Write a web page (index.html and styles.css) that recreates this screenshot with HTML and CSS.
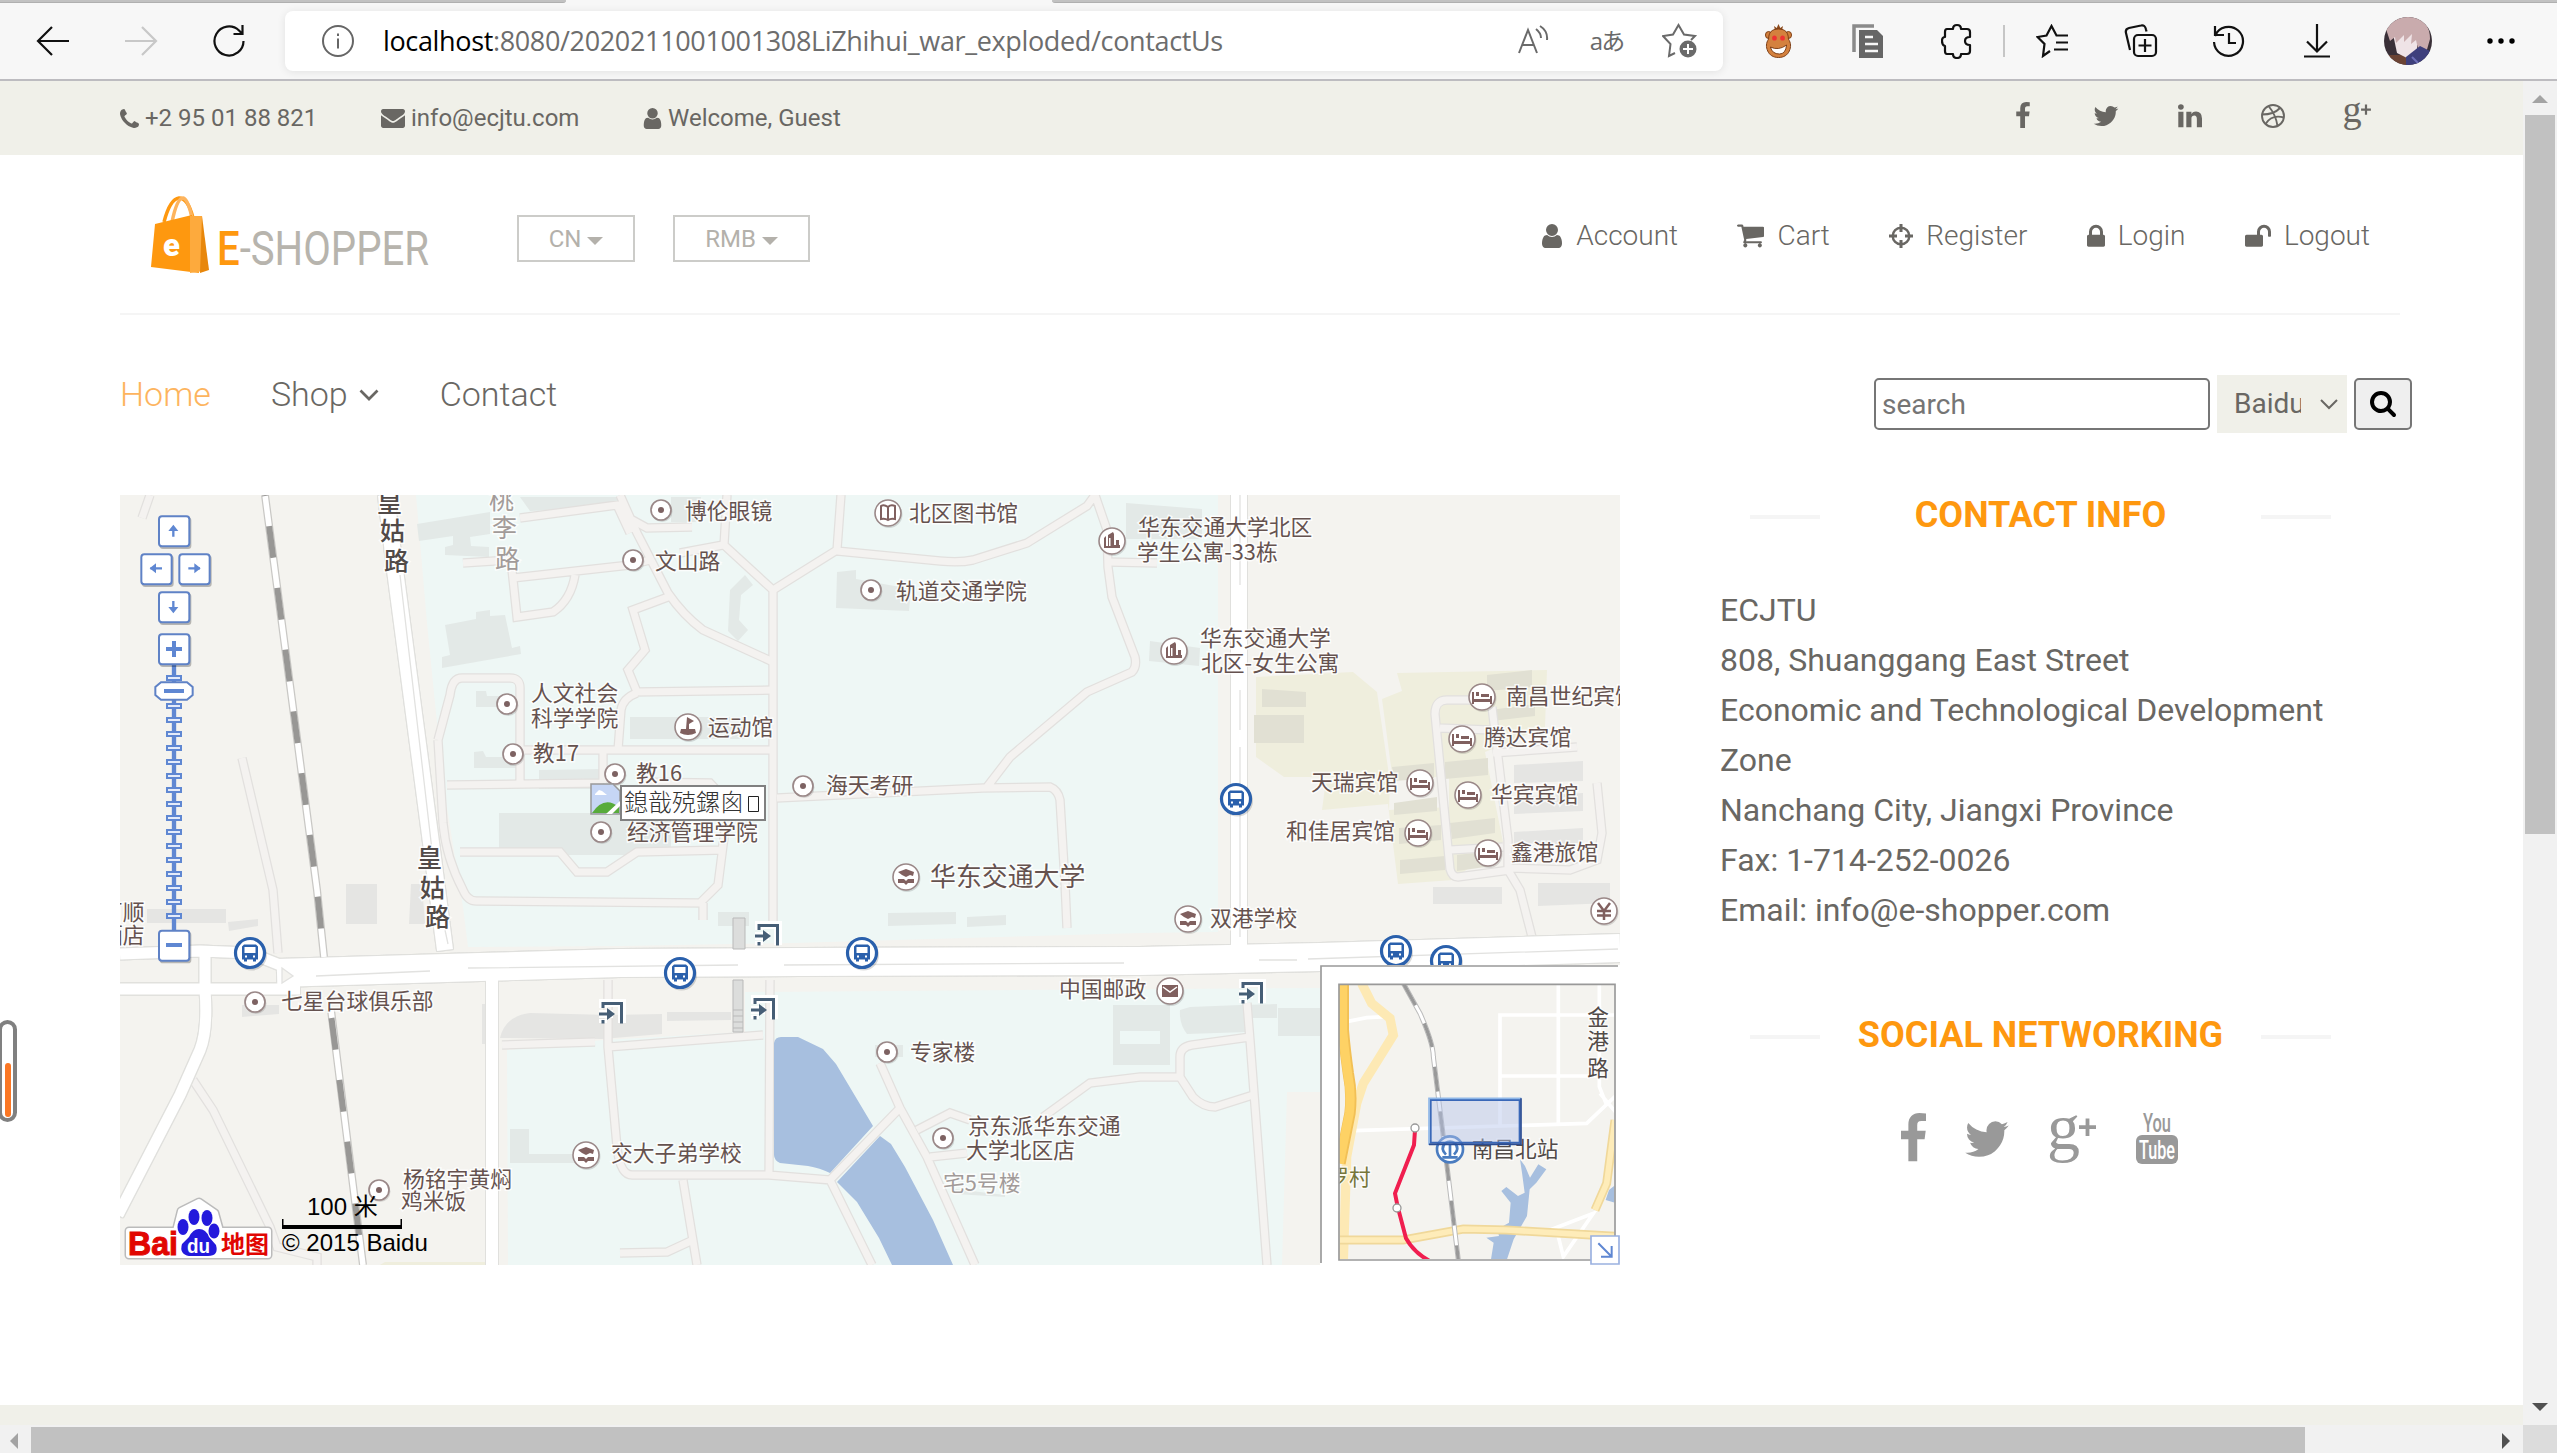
FILE: index.html
```html
<!DOCTYPE html>
<html lang="en">
<head>
<meta charset="utf-8">
<title>Contact | E-Shopper</title>
<link rel="stylesheet" href="styles.css">
</head>
<body>
<svg class="defs" width="0" height="0">
  <symbol id="i-facebook" viewBox="479 0 864 1792"><path d="M1343 12v264h-157q-86 0-116 36t-30 108v189h293l-39 296h-254v759h-306v-759h-255v-296h255v-218q0-186 104-288.500t277-102.500q147 0 228 12z"/></symbol>
  <symbol id="i-twitter" viewBox="64 0 1664 1792"><path d="M1684 408q-67 98-162 167 1 14 1 42 0 130-38 259.500t-115.500 248.500-184.500 210.500-258 146-323 54.500q-271 0-496-145 35 4 78 4 225 0 401-138-105-2-188-64.500t-114-159.500q33 5 61 5 43 0 85-11-112-23-185.500-111.500t-73.500-205.500v-4q68 38 146 41-66-44-105-115t-39-154q0-88 44-163 121 149 294.500 238.500t371.500 99.500q-8-38-8-74 0-134 94.500-228.500t228.500-94.500q140 0 236 102 109-21 205-78-37 115-142 178 93-10 186-50z"/></symbol>
  <symbol id="i-gplus" viewBox="0 0 48 50"><text x="-1" y="35" font-family="Liberation Serif, serif" font-size="66">g</text><path d="M31 11.200h17v3.800h-17zM37.600 4.500h3.800v17.500h-3.800z"/></symbol>
  <symbol id="i-user" viewBox="256 128 1280 1536"><path d="M1536 1399q0 109-62.500 187t-150.500 78h-854q-88 0-150.500-78t-62.500-187q0-85 8.500-160.500t31.500-152 58.500-131 94-89 134.500-34.500q131 128 313 128t313-128q76 0 134.500 34.500t94 89 58.500 131 31.500 152 8.500 160.500zm-256-887q0 159-112.500 271.500t-271.500 112.500-271.500-112.500-112.500-271.500 112.500-271.500 271.500-112.500 271.500 112.500 112.500 271.500z"/></symbol>
  <symbol id="p-dot" viewBox="-14 -14 28 28" overflow="visible"><circle r="10.500" cx="1" cy="1.500" fill="#000" opacity=".13"/><circle r="10" fill="#fff" stroke="#9a8888" stroke-width="1.700"/><circle r="3" fill="#7d6262"/></symbol>
  <symbol id="p-ring" viewBox="-14 -14 28 28" overflow="visible"><circle r="13.500" cx="1" cy="1.500" fill="#000" opacity=".13"/><circle r="13" fill="#fff" stroke="#9a8888" stroke-width="1.600"/></symbol>
  <symbol id="p-bed" viewBox="-14 -14 28 28" overflow="visible"><use href="#p-ring" x="-14" y="-14" width="28" height="28"/><path fill="#80605f" d="M-10-5h2v7h16v-3h2v8h-2v-2h-16v2h-2zM-6-5h3v4h-3zM-1-3h8v3h-8z"/></symbol>
  <symbol id="p-home" viewBox="-14 -14 28 28" overflow="visible"><use href="#p-ring" x="-14" y="-14" width="28" height="28"/><path fill="#80605f" d="M-8-3l2-2v10h2v-11l5-3 1 2v11h2v-5h3v5h1v3h-16z"/><path fill="#fff" d="M-3-3h1.500v8h-1.500z"/></symbol>
  <symbol id="p-school" viewBox="-14 -14 28 28" overflow="visible"><use href="#p-ring" x="-14" y="-14" width="28" height="28"/><path fill="#80605f" d="M-8-5l8-3 8 3-1 4-3-1-4 2-4-2zM-8 2h6l2 2 2-2h6v4h-6l-2 2-2-2h-6z"/></symbol>
  <symbol id="p-bus" viewBox="-16 -16 32 32" overflow="visible"><circle r="15.500" cx="1.500" cy="2" fill="#000" opacity=".15"/><circle r="14.500" fill="#fff" stroke="#2a60ac" stroke-width="3.200"/><path fill="#2a60ac" d="M-6-8.500h12l2 2v13h-2v2h-3v-2h-6v2h-3v-2h-2v-13z"/><path fill="#fff" d="M-5.500-6h11v6h-11zM-5 2.500h2v2h-2zM3 2.500h2v2h-2z"/></symbol>
  <symbol id="p-exit" viewBox="-13 -12 26 24" overflow="visible"><g stroke="#fff" stroke-width="8" fill="none"><path d="M-8-5v-5h19v20M-12 1h14M-8 6v4"/></g><g stroke="#465e76" stroke-width="3" fill="none"><path d="M-8-5v-4.500h18.500v20M-12 1h12M-8 7v3.500"/></g><path fill="#465e76" d="M-4-5l8 6-8 6z"/></symbol>
</svg>

<header class="toolbar">
  <div class="tabs"><i class="tab-left"></i><i class="tab-right"></i></div>
  <div class="tools">
    <span class="tool"><svg class="line" width="36" height="32" viewBox="0 0 36 32"><path d="M34 16H3M17 2L3 16l14 14"/></svg></span>
    <span class="tool dim"><svg class="line" width="36" height="32" viewBox="0 0 36 32"><path d="M2 16h31M19 2l14 14-14 14"/></svg></span>
    <span class="tool"><svg class="line" width="34" height="34" viewBox="0 0 34 34"><path d="M31.500 17A14.500 14.500 0 1 1 27 6.500l3 3M30.500 1v9h-9"/></svg></span>
    <div class="address">
      <svg class="info" width="34" height="34" viewBox="0 0 34 34"><circle cx="17" cy="17" r="15" fill="none" stroke="#666" stroke-width="2"/><path d="M16 14.500h2v10h-2zM16 9.500h2v2.500h-2z" fill="#666"/></svg>
      <span class="url"><b>localhost</b>:8080/2020211001001308LiZhihui_war_exploded/contactUs</span>
      <span class="aux"><svg class="gray" width="34" height="32" viewBox="0 0 34 32"><path d="M2 28L11 5l9 23M5 20h12M19 4q5 4 5 9M23 1q8 5 7 14"/></svg></span>
      <span class="aux lang">aあ</span>
      <span class="aux"><svg class="gray" width="36" height="36" viewBox="0 0 36 36"><path d="M13 30l-6 3 1.500-12L1 13l10-1.500L16.500 2 22 11.500l11 1.500-4 4"/><circle cx="26" cy="26" r="8.500" fill="#6a6a6a" stroke="none"/><path d="M26 21v10M21 26h10" stroke="#fff"/></svg></span>
    </div>
    <span class="tool ext first"><svg width="27" height="34" viewBox="0 0 30 34" preserveAspectRatio="none"><path d="M11 6L10 2l3 2 2-4 2 4 3-2-1 4z" fill="#8c4a1c"/><circle cx="4" cy="11" r="3.500" fill="#d4813e" stroke="#7a3b12"/><circle cx="26" cy="11" r="3.500" fill="#d4813e" stroke="#7a3b12"/><path d="M15 5c8 0 11 4 11 10 3 4 3 8 1 12-2 4-6 6.500-12 6.500S5 31 3 27c-2-4-2-8 1-12C4 9 7 5 15 5z" fill="#d4813e" stroke="#7a3b12"/><circle cx="10.500" cy="14" r="2.600" fill="#e33"/><circle cx="19.500" cy="14" r="2.600" fill="#e33"/><path d="M6 23q9 4 18-2-1 9-8 9-8 0-10-7z" fill="#fff" stroke="#7a3b12"/></svg></span>
    <span class="tool ext"><svg width="32" height="34" viewBox="0 0 32 34"><path d="M2 28V2h20" fill="none" stroke="#8a8a8a" stroke-width="3.500"/><path d="M7 6h18l6 6v22H7z" fill="#666"/><path d="M13 13h8M13 20h13M13 27h13" stroke="#f7f7f7" stroke-width="2.500"/></svg></span>
    <span class="tool ext"><svg class="line" width="32" height="36" viewBox="0 0 32 36"><path d="M5 6h6q0-4 4-4t4 4h6q3 0 3 3v5q-5 0-5 4t5 4v6q0 3-3 3h-6q0 4-4 4t-4-4H5q-2 0-2-3v-5q-3-1-3-5t3-4V9q0-3 2-3z" transform="translate(1 0)" stroke-linejoin="round"/></svg></span>
    <i class="sep"></i>
    <span class="tool"><svg class="line" width="34" height="34" viewBox="0 0 34 34"><path d="M14 27l-7 5 1.500-12L1.500 13l9-1.500L15.500 2l5 9.500H32M20 18.500h12M18 25.500h14"/></svg></span>
    <span class="tool"><svg class="line" width="34" height="34" viewBox="0 0 34 34"><rect x="10" y="11" width="22" height="21" rx="4"/><path d="M21 15v13M14.500 21.500h13M6 26L2 9q-1-4 3-5l12-2.500q4-1 5 4l.5 2"/></svg></span>
    <span class="tool"><svg class="line" width="34" height="34" viewBox="0 0 34 34"><path d="M3 12A14.500 14.500 0 1 1 2 18M3 2v9h9M17 9v10h7"/></svg></span>
    <span class="tool"><svg class="line" width="28" height="34" viewBox="0 0 28 34"><path d="M14 0v27M4 17.500l10 10 10-10M1 32.500h26"/></svg></span>
    <span class="tool avatar"><svg width="48" height="48" viewBox="0 0 48 48"><defs><clipPath id="av"><circle cx="24" cy="24" r="24"/></clipPath></defs><g clip-path="url(#av)"><path fill="#3a3038" d="M0 0h48v48H0z"/><path fill="#6b4334" d="M0 38h24v10H0z"/><path fill="#efe3e6" d="M9 17l24-3v18l-8 10-12-6z"/><path fill="#c9abad" d="M2 12Q12-2 28 0q18 3 18 22l-4 14-8-4-2-9-5 4 1-10-8 8 0-7-8 8-1-6-5 4z"/><path fill="#3e3f7c" d="M22 40l14-11 12 6v13H22z"/><path stroke="#6e6fb8" stroke-width="2" d="M28 40l8 8"/></g></svg></span>
    <span class="tool dots"><svg width="28" height="8" viewBox="0 0 28 8"><circle cx="3" cy="4" r="2.700"/><circle cx="14" cy="4" r="2.700"/><circle cx="25" cy="4" r="2.700"/></svg></span>
  </div>
</header>

<div class="browser">
  <main class="page">
    <div class="topbar">
      <ul class="contacts">
        <li class="c1"><svg width="19" height="19" viewBox="192 256 1408 1408"><path d="M1600 1368q0 27-10 70.500t-21 68.500q-21 50-122 106-94 51-186 51-27 0-53-3.500t-57.500-12.500-47-14.500-55.500-20.500-49-18q-98-35-175-83-127-79-264-216t-216-264q-48-77-83-175-3-9-18-49t-20.500-55.500-14.500-47-12.500-57.500-3.500-53q0-92 51-186 56-101 106-122 25-11 68.500-21t70.500-10q14 0 21 3 18 6 53 76 11 19 30 54t35 63.500 31 53.500q3 4 17.500 25t21.500 35.500 7 28.500q0 20-28.500 50t-62 55-62 53-28.500 46q0 9 5 22.500t8.500 20.500 14 24 11.500 19q76 137 174 235t235 174q2 1 19 11.500t24 14 20.500 8.500 22.500 5q18 0 46-28.500t53-62 55-62 50-28.500q14 0 28.500 7t35.500 21.500 25 17.500q25 15 53.500 31t63.500 35 54 30q70 35 76 53 3 7 3 21z"/></svg><span>+2 95 01 88 821</span></li>
        <li class="c2"><svg width="24" height="19" viewBox="0 256 1792 1408"><path d="M1792 710v794q0 66-47 113t-113 47h-1472q-66 0-113-47t-47-113v-794q44 49 101 87 362 246 497 345 57 42 92.500 65.500t94.500 48 110 24.500h2q51 0 110-24.500t94.500-48 92.500-65.500q170-123 498-345 57-39 100-87zm0-294q0 79-49 151t-122 123q-376 261-468 325-10 7-42.500 31t-54 38.500-52 32.500-57.500 27-50 9h-2q-23 0-50-9t-57.500-27-52-32.500-54-38.500-42.500-31q-91-64-262-182.500t-205-142.500q-62-42-117-115.500t-55-136.500q0-78 41.500-130t118.500-52h1472q65 0 112.500 47t47.500 113z"/></svg><span>info@ecjtu.com</span></li>
        <li class="c3"><svg width="19" height="21"><use href="#i-user"/></svg><span>Welcome, Guest</span></li>
      </ul>
      <ul class="socials">
        <li><svg width="14" height="28"><use href="#i-facebook"/></svg></li>
        <li><svg width="26" height="28"><use href="#i-twitter"/></svg></li>
        <li><svg width="28" height="28" viewBox="0 0 1792 1792"><path d="M477 625v991h-330v-991h330zm21-306q1 73-50.500 122t-135.500 49h-2q-82 0-132-49t-50-122q0-74 51.500-122.500t134.500-48.500 133 48.500 51 122.500zm1166 729v568h-329v-530q0-105-40.500-164.500t-126.500-59.500q-63 0-105.500 34.500t-63.500 85.500q-11 30-11 81v553h-329q2-399 2-647t-1-296l-1-48h329v144h-2q20-32 41-56t56.500-52 87-43.500 114.500-15.500q171 0 275 113.500t104 332.500z"/></svg></li>
        <li><svg class="ball" width="26" height="26" viewBox="0 0 26 26"><circle cx="13" cy="13" r="11"/><path d="M2 11.500q12 0 18-6.500M8.500 3Q16 12 17.500 23M5.500 21q6-10 18.500-6.500"/></svg></li>
        <li><svg width="28" height="29"><use href="#i-gplus"/></svg></li>
      </ul>
    </div>

    <div class="middle">
      <svg class="logo" width="290" height="90" viewBox="140 190 290 90"><g fill="none" stroke="#fe980f" stroke-width="3.500"><path d="M164 222q6-23 15-24 9 0 14 20"/><path d="M172 222q5-24 11-24 5 1 9 20" stroke="#fdb45e"/></g><path fill="#fe980f" d="M155 224l37-9 7 58-48-6z"/><path fill="#fdaa3d" d="M190 216l12 0 2 55-14 2z"/><path fill="#e8870b" d="M202 216l7 54-9 3z"/><text x="163" y="256" font-family="Roboto, sans-serif" font-weight="900" font-size="31" fill="#fff">e</text><text y="265" font-family="Roboto, sans-serif" font-size="48" textLength="212" lengthAdjust="spacingAndGlyphs" x="217" fill="#b7b4ad"><tspan fill="#fe980f" font-weight="500">E</tspan><tspan font-weight="400">-SHOPPER</tspan></text></svg>
      <button class="pick cn">CN<i class="caret"></i></button>
      <button class="pick rmb">RMB<i class="caret"></i></button>
      <ul class="account">
        <li><svg width="22" height="24"><use href="#i-user"/></svg>Account</li>
        <li><svg width="27" height="24" viewBox="64 256 1664 1408"><path d="M704 1536q0 52-38 90t-90 38-90-38-38-90 38-90 90-38 90 38 38 90zm896 0q0 52-38 90t-90 38-90-38-38-90 38-90 90-38 90 38 38 90zm128-1088v512q0 24-16.500 42.500t-40.500 21.500l-1044 122q13 60 13 70 0 16-24 64h920q26 0 45 19t19 45-19 45-45 19h-1024q-26 0-45-19t-19-45q0-11 8-31.500t16-36 21.500-40 15.500-29.500l-177-823h-204q-26 0-45-19t-19-45 19-45 45-19h256q16 0 28.500 6.500t19.500 15.500 13 24.500 8 26 5.500 29.500 4.500 26h1201q26 0 45 19t19 45z"/></svg>Cart</li>
        <li><svg width="24" height="24" viewBox="0 0 24 24"><circle cx="12" cy="12" r="8.300" fill="none" stroke="#696763" stroke-width="2.400"/><circle cx="12" cy="12" r="3" fill="#fff"/><path d="M10.500 0h3v8h-3zM10.500 16h3v8h-3zM0 10.500h8v3H0zM16 10.500h8v3h-8z"/></svg>Register</li>
        <li><svg width="18" height="24" viewBox="320 80 1152 1536"><path d="M640 768h512v-192q0-106-75-181t-181-75-181 75-75 181v192zm832 96v576q0 40-28 68t-68 28h-960q-40 0-68-28t-28-68v-576q0-40 28-68t68-28h32v-192q0-184 132-316t316-132 316 132 132 316v192h32q40 0 68 28t28 68z"/></svg>Login</li>
        <li><svg width="26" height="24" viewBox="64 80 1664 1536"><path d="M1728 576v256q0 26-19 45t-45 19h-64q-26 0-45-19t-19-45v-256q0-106-75-181t-181-75-181 75-75 181v192h96q40 0 68 28t28 68v576q0 40-28 68t-68 28h-960q-40 0-68-28t-28-68v-576q0-40 28-68t68-28h672v-192q0-185 131.500-316.500t316.500-131.500 316.500 131.500 131.500 316.500z"/></svg>Logout</li>
      </ul>
    </div>

    <div class="menu">
      <nav>
        <a class="active">Home</a>
        <a>Shop<svg width="20" height="12" viewBox="0 0 20 12"><path d="M1.500 1.500L10 10l8.500-8.500" fill="none" stroke="#696763" stroke-width="2.700"/></svg></a>
        <a>Contact</a>
      </nav>
      <form class="search">
        <span class="field">search</span>
        <span class="engine"><span>Baidu</span><svg width="18" height="11" viewBox="0 0 18 11"><path d="M1 1l8 8 8-8" fill="none" stroke="#696763" stroke-width="2"/></svg></span>
        <span class="go"><svg width="26" height="28" viewBox="64 128 1664 1664"><path d="M1216 832q0-185-131.500-316.500t-316.500-131.500-316.500 131.500-131.500 316.500 131.500 316.500 316.500 131.500 316.500-131.500 131.500-316.500zm512 832q0 52-38 90t-90 38q-54 0-90-38l-343-342q-179 124-399 124-143 0-273.500-55.500t-225-150-150-225-55.500-273.500 55.500-273.500 150-225 225-150 273.500-55.500 273.500 55.500 225 150 150 225 55.500 273.500q0 220-124 399l343 343q37 37 37 90z"/></svg></span>
      </form>
    </div>

    <div class="content">
      <svg class="map" width="1500" height="770" viewBox="120 495 1500 770">
        <defs>
          <!-- campus lanes, stroked twice: outline then surface -->
          <g id="lanes">
            <path d="M773 590V925M727 495l-3 50 49 45M841 495l-4 55-64 40M837 551l103 10q20 2 33-1l54-17 60-37 8-11 12 35 1 37 4 30 23 60q2 10-3 15l-45 20-77 65-23 30M777 798l206-10 67-1q8 3 10 13l5 83 2 45"/>
            <path d="M620 495l17 38 31 60q15 22 35 37l70 32M627 517l20 11 45-1M680 553l43-8M668 597l-35 13 12 40-17 20 9 22 136-2M520 750h253M520 518l97-13 13 28M512 570l5 47 36-5q18-12 22-37M463 563l47-3M513 578l117-13 20-5"/>
            <path d="M438 740l12-45q2-17 12-17h48q10 0 10 10v95M447 785l156-2M603 750v33M618 750l3-40q2-12 16-17M438 740l5 83q3 35 20 67 5 12 15 11l222 2 18-18 7-55M460 852h100l17 20h30l30-20 85-2 4-25M640 782l70 1 19 20-3 27M703 903v17"/>
            <path d="M502 1045l93-3M608 980v67l9 100q3 28 15 28h137l61 5 70-72M608 1047l155-12M770 980l-1 195M830 1180l42 85M880 1063l20 45 27 49 48 108M917 1130l33-17 20 7M930 1157l37-4M1043 1117l47-34 50-6h40l13 20q10 10 22 10l38-12M1180 1077v-20q0-10 12-12l58-8M1247 1003l3 37 17 225M683 1180l14 85M620 1253l47-1 26-12"/>
            <path d="M193 1080l20 30 57 117 7 20 40 10v8M142 518l8-23M242 758l31 132 5 63M1480 700h-33q-12 0-12 14l15 155q2 8 8 8l52-7M1492 707l16 133v30l12 20 12 47M1440 728l50 2M1493 753l84-6M1597 783l5 50-5 27-27 10-60-2M1450 850l53-3M1108 562l49 1"/>
          </g>
          <g id="streets">
            <path d="M120 954l80-3 50 2 30 12M120 989h180M205 955v35q3 40-5 60l-20 45-62 120" stroke-width="11"/>
            <path d="M492 970V1265" stroke-width="12"/>
            <path d="M386 495l9 75 37 280 13 100M1239 495V950" stroke-width="16"/>
            <path d="M277 973l203-6 140-4 180-1 340-1 180-4 300-9" stroke-width="28"/>
          </g>
          <clipPath id="ov"><path d="M658 313h825v824H658z"/></clipPath>
        </defs>
        <path fill="#f4f3ef" d="M120 495h1500v770H120z"/>
        <path fill="#eef7f5" d="M416 495l11 128 16 160 20 124 5 40 152-1 173-3 347-10 78-1V495zM507 1050l96-10 142-8v-40l575-4v104h-33l-5 173H508z"/>
        <g fill="#efeedd"><path d="M1256 677l97-5 24 20 13 90-1 28 60-3v-30l-60 0h-105l-28-20zM1397 673l150-3-2 57-60 25 18 90-50 38-55 4-10-80-66 6 4-30 66-6-10-75 20-8z"/><path d="M380 1265l5-3h110v3z"/></g>
        <g fill="#e3e9e7"><path d="M417 524l73-12v22l-20 3 1 9 18 1v10l-44-2v-8l8-2v-9l-34 5zM445 625l31-6v-7l14-2v6l15-1 7 33 8-2 1 8-79 14v-11l8-2zM476 691h10l1 5h22v11h-33zM474 752l9-1 3 6h35v11h-47zM539 770l65-1v20h-65zM499 813h172v42H499zM730 590l15-15 8 10-12 10-2 25 9 10-10 11-10-10zM837 572l19-2v9l55 10-2 22-73-3zM630 717h115v22H630zM520 497h100v10l-90 4zM671 497h30v25h-30zM1126 503l76 6v30h-76zM1150 641l50 7-1 18-50-5zM888 913l68-1v12l-68 2zM967 917l39-2v10l-39 2zM510 1129h19v25h50l-1 9h-68zM718 912h31v14h-31zM1113 1005h57v60h-57zM1180 1010l10-3 50-2 37-1v14h-30v14l-60 2q-8-10-7-24zM1278 1008h42v28h-42zM955 1189l50 6v2l-50-3zM875 1045h28v12h-28z"/><path fill="#eef7f5" d="M1120 1031h40v13h-40z"/></g>
        <g fill="#e5e5e3"><path d="M346 884h31v40h-31zM411 884h11l3 40h-16zM147 909h79v14h-79zM228 922l30-3v7l-29 5zM242 1005h37v9l-37 3zM482 1004h7v40h-7zM500 1038q5-22 30-25l80 2 52-1v20l-60 5zM667 1012h64v8l-64 1zM1433 887h69v17h-69zM1538 883h72v20l-72 3zM1514 765l69-4v20l-69 2zM1514 797l69-4v18l-69 3zM1514 832l69-4v15l-69 2z"/></g>
        <g fill="#e1e0d3"><path d="M1262 689l44 3v15h-44zM1254 715h50v28h-50zM1487 675l45-5v17l-45 4zM1490 710l45-6v12l-43 5zM1392 767l42-4v15l-40 3zM1445 762l43-4v17l-43 4zM1394 803l43-6v14l-43 4zM1399 828l42-3v15l-42 4zM1450 823l45-5v15l-43 6zM1400 860l45-4v14l-45 4zM1457 855l35-4v15l-35 5z"/></g>
        <use href="#lanes" class="lane-edge"/><use href="#lanes" class="lane"/>
        <path fill="#a7bfdf" d="M774 1043q1-6 7-6h17l25 12 13 15 37 62-43 47q-10-5-22-7l-28-3q-6-3-6-8zM880 1136l11 8 14 23 28 53 20 45h-61l-13-27-22-36-20-20z"/>
        <use href="#streets" class="street-edge"/><use href="#streets" class="street"/>
        <g fill="none" stroke="#e2e2e0" stroke-width="1.300"><path d="M400 575l32 275M445 930l3 14M1240 495v90M1240 690v40M1240 747V937M316 976l114-5M468 968l270-3M784 965l340-2M1259 960h38M1308 959l310-10"/><path d="M282 968l11 8-11 7z" fill="#f4f3ef"/></g>
        <g fill="#dcdddc" stroke="#b9b9b9"><path d="M733 918h12v31h-12zM733 980h10v52h-10z"/><path d="M733 1010h10M733 1016h10M733 1022h10M733 1028h10"/></g>
        <g fill="none"><path d="M265 495l52 395 7 67M331 1010l32 255" stroke="#c9c8c5" stroke-width="8"/><path d="M265 495l52 395 7 67M331 1010l32 255" stroke="#fff" stroke-width="5.500"/><path d="M265 495l52 395 7 67" stroke="#989795" stroke-width="6" stroke-dasharray="32 30.300" stroke-dashoffset="31"/><path d="M331.500 1018l31.500 247" stroke="#989795" stroke-width="6" stroke-dasharray="32 30.300"/></g>

        <g class="pois">
          <use href="#p-dot" x="647" y="496" width="28" height="28"/><use href="#p-dot" x="619" y="546" width="28" height="28"/><use href="#p-dot" x="857" y="576" width="28" height="28"/>
          <use href="#p-dot" x="493" y="690" width="28" height="28"/><use href="#p-dot" x="499" y="740" width="28" height="28"/><use href="#p-dot" x="601" y="760" width="28" height="28"/><use href="#p-dot" x="587" y="818" width="28" height="28"/>
          <use href="#p-dot" x="789" y="772" width="28" height="28"/><use href="#p-dot" x="241" y="988" width="28" height="28"/><use href="#p-dot" x="873" y="1038" width="28" height="28"/><use href="#p-dot" x="929" y="1124" width="28" height="28"/><use href="#p-dot" x="365" y="1176" width="28" height="28"/>
          <use href="#p-ring" x="874" y="499" width="28" height="28"/><path d="M888 507q-4-3-7-1v13q4-1 7 1 3-2 7-1v-13q-4-2-7 1v13" fill="none" stroke="#80605f" stroke-width="2"/>
          <use href="#p-ring" x="674" y="713" width="28" height="28"/><path fill="#80605f" d="M687 717l7 4-5 3v5h6l1 4q-8 4-16 0l1-4h5z"/>
          <use href="#p-home" x="1098" y="527" width="28" height="28"/><use href="#p-home" x="1160" y="637" width="28" height="28"/>
          <use href="#p-school" x="892" y="863" width="28" height="28"/><use href="#p-school" x="1174" y="905" width="28" height="28"/><use href="#p-school" x="572" y="1141" width="28" height="28"/>
          <use href="#p-bed" x="1468" y="683" width="28" height="28"/><use href="#p-bed" x="1448" y="725" width="28" height="28"/><use href="#p-bed" x="1406" y="769" width="28" height="28"/><use href="#p-bed" x="1454" y="781" width="28" height="28"/><use href="#p-bed" x="1404" y="819" width="28" height="28"/><use href="#p-bed" x="1474" y="839" width="28" height="28"/>
          <use href="#p-ring" x="1156" y="977" width="28" height="28"/><path fill="#80605f" d="M1162 985h16v12h-16z"/><path d="M1163 987l7 5 7-5" fill="none" stroke="#fff" stroke-width="1.500"/>
          <use href="#p-ring" x="1590" y="897" width="28" height="28"/><path d="M1598 903l6 8 6-8M1604 911v9M1597 911h14M1597 915.500h14" fill="none" stroke="#80605f" stroke-width="2.500"/>
          <use href="#p-bus" x="1220" y="783" width="32" height="32"/><use href="#p-bus" x="234" y="937" width="32" height="32"/><use href="#p-bus" x="664" y="957" width="32" height="32"/><use href="#p-bus" x="846" y="937" width="32" height="32"/><use href="#p-bus" x="1380" y="935" width="32" height="32"/><use href="#p-bus" x="1430" y="945" width="32" height="32"/>
          <use href="#p-exit" x="754" y="923" width="26" height="24"/><use href="#p-exit" x="750" y="997" width="26" height="24"/><use href="#p-exit" x="598" y="1001" width="26" height="24"/><use href="#p-exit" x="1238" y="981" width="26" height="24"/>
        </g>

        <g class="labels">
          <text x="685" y="519">博伦眼镜</text><text x="909" y="521">北区图书馆</text><text x="655" y="569">文山路</text><text x="896" y="599">轨道交通学院</text>
          <text x="708" y="735">运动馆</text><text x="636" y="781">教16</text><text x="826" y="793">海天考研</text><text x="627" y="840">经济管理学院</text>
          <text x="930" y="886" class="big">华东交通大学</text>
          <text x="531" y="701">人文社会</text><text x="531" y="726">科学学院</text><text x="533" y="761">教17</text>
          <text x="1138" y="535">华东交通大学北区</text><text x="1137" y="560">学生公寓-33栋</text><text x="1200" y="646">华东交通大学</text><text x="1201" y="671">北区-女生公寓</text>
          <text x="1506" y="704">南昌世纪宾馆</text><text x="1484" y="745">腾达宾馆</text><text x="1311" y="790">天瑞宾馆</text><text x="1491" y="802">华宾宾馆</text><text x="1286" y="839">和佳居宾馆</text><text x="1511" y="860">鑫港旅馆</text>
          <text x="1210" y="926">双港学校</text><text x="281" y="1009">七星台球俱乐部</text><text x="1059" y="997">中国邮政</text><text x="910" y="1060">专家楼</text>
          <text x="968" y="1134">京东派华东交通</text><text x="966" y="1158">大学北区店</text><text x="943" y="1191" class="faint">宅5号楼</text><text x="611" y="1161">交大子弟学校</text>
          <text x="403" y="1187">杨铭宇黄焖</text><text x="401" y="1209">鸡米饭</text>
          <text x="101" y="920">百顺</text><text x="101" y="943">酒店</text>
          <g class="road"><text x="377" y="512">皇</text><text x="380" y="540">姑</text><text x="384" y="570">路</text><text x="417" y="867">皇</text><text x="420" y="897">姑</text><text x="425" y="926">路</text></g>
          <g class="road faint"><text x="489" y="509">桃</text><text x="492" y="537">李</text><text x="495" y="568">路</text></g>
        </g>

        <!-- pan and zoom controls, drawn on a triple-size grid -->
        <g transform="translate(110 490) scale(.33333)">
          <path d="M192 525V1320" stroke="#5f87d2" stroke-width="13"/>
          <g fill="#e4ebfa" stroke="#5f87d2" stroke-width="6"><path d="M171 558h42v12h-42zM171 642h42v12h-42zM171 684h42v12h-42zM171 726h42v12h-42zM171 768h42v12h-42zM171 810h42v12h-42zM171 852h42v12h-42zM171 894h42v12h-42zM171 936h42v12h-42zM171 978h42v12h-42zM171 1020h42v12h-42zM171 1062h42v12h-42zM171 1104h42v12h-42zM171 1146h42v12h-42zM171 1188h42v12h-42zM171 1230h42v12h-42zM171 1272h42v12h-42z"/></g>
          <g class="knob-shadow"><rect x="149" y="82" width="95" height="95" rx="10"/><rect x="96" y="196" width="95" height="95" rx="10"/><rect x="210" y="196" width="95" height="95" rx="10"/><rect x="149" y="310" width="95" height="95" rx="10"/><rect x="149" y="436" width="95" height="95" rx="10"/><rect x="149" y="1325" width="95" height="95" rx="10"/></g>
          <g class="knob"><rect x="147" y="79" width="91" height="90" rx="9"/><rect x="94" y="193" width="91" height="90" rx="9"/><rect x="208" y="193" width="91" height="90" rx="9"/><rect x="147" y="307" width="91" height="90" rx="9"/><rect x="147" y="433" width="91" height="90" rx="9"/><rect x="147" y="1322" width="91" height="90" rx="9"/><path d="M153 577h78l17 14v24l-17 14h-78l-17-14v-24z"/></g>
          <g stroke="#5f87d2" stroke-width="7" fill="none"><path d="M190 140v-28M121 235h35M270 235h-35M190 333v28"/></g>
          <path fill="#5f87d2" d="M190 104l15 19h-30zM119 235l19-15v30zM272 235l-19-15v30zM190 370l15-19h-30z"/>
          <path d="M168 477h48M192 453v48M168 1365h48M162 603h60" stroke="#5f87d2" stroke-width="12"/>
        </g>

        <!-- marker with a missing image -->
        <path fill="#c6d6f5" stroke="#999" stroke-width="1.500" d="M591 784h22l7 7v23h-29z"/><path fill="#58ab3b" d="M592 813q12-18 27-6v6z"/><path fill="#fff" d="M595 794l4-4 3 1 5 4h-12zM606 814l14-13v5l-8 8z"/>
        <path fill="#fff" stroke="#808080" stroke-width="2" d="M621 786h144v34H621z"/>
        <text x="624" y="811" class="marker">鎴戠殑鏍囪</text><path fill="none" stroke="#222" d="M748.500 796.500h10v15h-10z"/>

        <text x="307" y="1215" class="scale">100 米</text>
        <path d="M282 1219v10h120v-10h-1.500v6h-117v-6z"/>
        <text x="282" y="1251" class="scale">© 2015 Baidu</text>
        <g font-family="Liberation Sans, Noto Sans CJK SC, sans-serif" font-weight="700">
          <g fill="none" stroke="#bbb" stroke-width="9" stroke-linejoin="round"><path d="M129 1231h47l5-20 18-9 16 11 5 18h48v24H129z"/></g><path fill="#fff" stroke="#fff" stroke-width="6" stroke-linejoin="round" d="M129 1231h47l5-20 18-9 16 11 5 18h48v24H129z"/>
          <text x="128" y="1255" font-size="33" textLength="50" lengthAdjust="spacingAndGlyphs" fill="#e10602" stroke="#e10602">Bai</text>
          <g fill="#2319dc"><ellipse cx="183" cy="1227" rx="5.500" ry="8"/><ellipse cx="194" cy="1217" rx="5.500" ry="8"/><ellipse cx="207" cy="1218" rx="5.500" ry="8"/><ellipse cx="214" cy="1231" rx="5.500" ry="7.500"/><path d="M199 1229q7 0 10 8l7 8q3 11-8 11h-19q-10-2-7-12l7-7q4-8 10-8z"/></g>
          <text x="187" y="1253" font-size="20" textLength="23" lengthAdjust="spacingAndGlyphs" fill="#fff">du</text>
          <text x="221" y="1253" font-size="24" textLength="48" fill="#e10602">地图</text>
        </g>

        <!-- overview inset -->
        <g transform="translate(1120 880) scale(.33333)">
          <path fill="#fff" d="M600 255h900v900H600z"/><path fill="none" stroke="#999" stroke-width="5" d="M603 1149V258h891"/>
          <g clip-path="url(#ov)">
            <path fill="#f4f3ef" d="M650 300h840v850H650z"/>
            <g fill="none" stroke="#fff" stroke-width="11"><path d="M1315 310v425M1438 310v310l20 50M1140 740V405h350M1140 588h290M680 425l60-12 60-3M700 752l700-22 100-95M1490 700l-50-60M1290 1050l130-50-90 130-20-80 110 20z" /></g>
            <path fill="#a7bfdf" d="M1200 838l15 20 15 35 25-40 24 15-30 40-20 20-8 80-40 70-20 60h-48l8-50-22-15 38-5-5-20 35-20 5-60-28-35 15-12 35 27 20-10-8-60zM1457 960l10-30 25-20v60z"/>
            <path d="M725 310l30 60 55 45 10 50-40 65-50 80-20 60 -30 160-10 310" fill="none" stroke="#fde9b4" stroke-width="28"/>
            <path d="M660 1080h190l180-33 130 3 340 20M1485 720l-25 190-35 80" fill="none" stroke="#f0d89a" stroke-width="27"/><path d="M660 1080h190l180-33 130 3 340 20M1485 720l-25 190-35 80" fill="none" stroke="#feecb9" stroke-width="17"/>
            <path d="M670 310v140q5 60 15 130 12 60 5 120l-30 150" fill="none" stroke="#f2c055" stroke-width="34"/><path d="M668 310v140q5 60 15 130 12 60 5 120l-30 150" fill="none" stroke="#fed265" stroke-width="27"/>
            <g fill="none"><path d="M850 310l50 90q40 90 40 130l15 120 25 200 35 290" stroke="#bbb" stroke-width="15"/><path d="M850 310l50 90q40 90 40 130l15 120 25 200 35 290" stroke="#fff" stroke-width="9"/><path d="M850 310l50 90q40 90 40 130l15 120 25 200 35 290" stroke="#999" stroke-width="10" stroke-dasharray="75 60"/></g>
            <path d="M885 750l-3 45-57 145 8 40 25 95q25 45 75 70" fill="none" stroke="#f01e4f" stroke-width="12"/><circle cx="885" cy="744" r="12" fill="#fff" stroke="#999" stroke-width="4"/><circle cx="831" cy="984" r="12" fill="#fff" stroke="#999" stroke-width="4"/>
            <g class="inset"><text x="1402" y="434">金</text><text x="1402" y="508">港</text><text x="1402" y="588">路</text><text x="1055" y="831">南昌北站</text><text x="622" y="914" fill="#77763a">罗村</text></g>
          </g>
          <path fill="none" stroke="#999" stroke-width="5" d="M657 313h828v827H657z"/>
          <circle cx="990" cy="808" r="39" fill="#fff" stroke="#4a7cc0" stroke-width="8"/><path d="M978 824q-18-18-3-34 15-10 30 0 15 16-3 34M990 795v35M967 832h46" fill="none" stroke="#4a7cc0" stroke-width="8"/>
          <path fill="#b4c3ea" fill-opacity=".45" stroke="#3a68b8" stroke-width="6" d="M932 660h267v128H932z"/><path d="M927 795V655h277" fill="none" stroke="#8fb7e8" stroke-width="5"/><path d="M1203 655v138H927" fill="none" stroke="#2b4c92" stroke-width="5"/>
          <path fill="#fff" stroke="#9bb1e0" stroke-width="5" d="M1413 1068h84v84h-84z"/><path d="M1435 1090l38 38M1475 1098v32h-32" fill="none" stroke="#5f87d2" stroke-width="6"/>
        </g>
      </svg>

      <aside class="contact">
        <h2>CONTACT INFO</h2>
        <address>ECJTU<br>808, Shuanggang East Street<br>Economic and Technological Development Zone<br>Nanchang City, Jiangxi Province<br>Fax: 1-714-252-0026<br>Email: info@e-shopper.com</address>
        <h2>SOCIAL NETWORKING</h2>
        <div class="networks">
          <svg width="25" height="52"><use href="#i-facebook"/></svg>
          <svg width="46" height="50"><use href="#i-twitter"/></svg>
          <svg width="48" height="50"><use href="#i-gplus"/></svg>
          <svg width="42" height="52" viewBox="0 0 42 52"><rect y="22" width="42" height="29" rx="6"/><g font-family="Roboto, sans-serif" font-weight="500" font-size="25"><text x="7" y="19" textLength="28" lengthAdjust="spacingAndGlyphs">You</text><text x="3" y="46" textLength="36" lengthAdjust="spacingAndGlyphs" fill="#fff">Tube</text></g></svg>
        </div>
      </aside>
    </div>
    <div class="footer"></div>
    <div class="gauge"><i></i></div>
  </main>
  <div class="vbar"><i class="up"></i><i class="thumb"></i><i class="down"></i></div>
  <div class="hbar"><i class="left"></i><i class="thumb"></i><i class="right"></i></div>
  <div class="corner"></div>
</div>
</body>
</html>
```

FILE: styles.css
```css
* { box-sizing: border-box; }
body { margin: 0; width: 2557px; height: 1453px; overflow: hidden; background: #fff; color: #696763; font-family: Roboto, sans-serif; display: flex; flex-direction: column; }
ul { list-style: none; margin: 0; padding: 0; display: flex; }
svg { display: block; flex: none; }
i { display: block; }
.defs { position: absolute; }

/* browser toolbar */
.toolbar { height: 81px; background: #f7f7f7; border-bottom: 2px solid #bdbcc0; }
.tabs { height: 3px; display: flex; justify-content: space-between; }
.tabs i { background: #c2c2c2; border-bottom: 1px solid #b0b0b0; }
.tab-left { width: 566px; border-radius: 0 0 5px 0; }
.tab-right { width: 1505px; border-radius: 0 0 0 5px; }
.tools { height: 76px; display: flex; align-items: center; padding-left: 9px; }
.tool { width: 88px; flex: none; display: flex; justify-content: center; }
.line { fill: none; stroke: #111; stroke-width: 2.2; }
.dim .line { stroke: #c8c8c8; }
.ext { width: 89px; }
.ext.first { margin-left: 12px; }
.sep { width: 2px; height: 32px; margin: 0 4px 0 2px; background: #c6c6c6; }
.avatar { width: 94px; }
.dots { width: 92px; }
.address { width: 1438px; height: 60px; margin-left: 12px; margin-right: -1px; padding: 0 7px 0 36px; flex: none; display: flex; align-items: center; background: #fff; border-radius: 8px; box-shadow: 0 1px 8px rgba(0,0,0,.09); }
.url { flex: 1; margin-left: 28px; font: 27px/40px "Open Sans", sans-serif; letter-spacing: -.35px; color: #6d6d6d; white-space: nowrap; }
.url b { font-weight: 400; color: #000; }
.aux { width: 73px; display: flex; justify-content: center; }
.gray { fill: none; stroke: #6a6a6a; stroke-width: 2; }
.lang { font: 24px/30px "Open Sans", "Noto Sans CJK JP", sans-serif; color: #6a6a6a; letter-spacing: -2px; }

/* viewport with scrollbars */
.browser { flex: 1; display: grid; grid-template-columns: 2523px 34px; grid-template-rows: 1344px 28px; }
.page { position: relative; display: flex; flex-direction: column; overflow: hidden; }
.topbar { height: 74px; flex: none; background: #f0f0e9; display: flex; justify-content: space-between; padding-left: 120px; }
.topbar svg, .account svg, .networks svg { fill: #696763; }
.topbar .ball { fill: none; stroke: #696763; stroke-width: 1.9; }
.contacts { font-size: 24px; align-items: center; height: 74px; }
.contacts li { display: flex; align-items: center; white-space: nowrap; }
.contacts span { margin-left: 6px; }
.c1 { width: 261px; }
.c2 { width: 262px; }
.socials { width: 419px; margin-right: 123px; height: 70px; align-items: center; }
.socials li { width: 83.500px; display: flex; justify-content: center; }

.middle { width: 2280px; height: 160px; flex: none; margin-left: 120px; border-bottom: 2px solid #f5f5f5; display: flex; align-items: flex-start; }
.logo { margin: 35px 0 0 20px; }
.pick { height: 47px; margin-top: 60px; padding: 0; display: flex; justify-content: center; align-items: center; background: #fff; border: 2px solid #ccccc9; color: #b4b1ab; font: 400 24px Roboto, sans-serif; }
.cn { width: 118px; margin-left: 87px; }
.rmb { width: 137px; margin-left: 38px; }
.caret { margin: 4px 0 0 6px; border: 8px solid transparent; border-top-color: #b4b1ab; border-bottom: 0; }
.account { margin: 61px 0 0 auto; padding-right: 30px; gap: 59.4px; font-size: 28px; font-weight: 300; line-height: 40px; }
.account li { display: flex; align-items: center; gap: 13px; }

.menu { height: 180px; flex: none; display: flex; justify-content: space-between; padding-left: 120px; }
nav { display: flex; gap: 60px; padding-top: 59px; font-size: 34px; font-weight: 300; line-height: 40px; }
nav a { display: flex; align-items: center; gap: 11px; height: 40px; }
nav svg { margin: 2px 1px 0 0; }
.active { color: #fdb45e; }
.search { display: flex; align-items: center; height: 58px; margin: 60px 109px 0 0; font-size: 28px; }
.field { width: 336px; height: 52px; border: 2px solid #767676; border-radius: 5px; padding-left: 6px; line-height: 50px; color: #757575; }
.engine { width: 130px; height: 58px; margin: 0 7px; background: #f0f0e9; display: flex; align-items: center; padding: 0 9px 0 17px; justify-content: space-between; line-height: 60px; }
.engine span { width: 67px; overflow: hidden; }
.go { width: 58px; height: 52px; border: 2px solid #767676; border-radius: 5px; background: #efefef; display: flex; align-items: center; justify-content: center; }
.search { margin-right: 111px; }
.go svg { fill: #000; }

.content { height: 910px; flex: none; display: flex; padding-left: 120px; }
.lane-edge { fill: none; stroke: #e2e0de; stroke-width: 9.500; }
.lane { fill: none; stroke: #f4f2f0; stroke-width: 7; }
#streets { fill: none; }
.street-edge { stroke: #e0e0dd; stroke-linejoin: round; filter: drop-shadow(0 1px 0 #e0e0dd) drop-shadow(0 -1px 0 #e0e0dd) drop-shadow(1px 0 0 #e0e0dd) drop-shadow(-1px 0 0 #e0e0dd); }
.street { stroke: #fff; stroke-linejoin: round; }
.labels, .inset { font-family: "Noto Sans CJK SC", sans-serif; fill: #65524f; }
.labels { font-size: 21.800px; stroke: #fff; stroke-opacity: .8; stroke-width: 3px; paint-order: stroke; }
.labels .big { font-size: 25.900px; }
.labels .road { font-size: 25px; fill: #514a48; font-weight: 500; }
.labels .faint { fill: #a29b99; font-weight: 400; }
.inset { font-size: 65px; fill: #514a48; stroke: #fff; stroke-opacity: .7; stroke-width: 8px; paint-order: stroke; }
.knob { fill: #fff; stroke: #5f82c6; stroke-width: 6; }
.knob-shadow { fill: #000; opacity: .25; }
.marker { font: 300 24px "Noto Sans CJK SC", sans-serif; fill: #333; }
.scale { font: 24px "Liberation Sans", "Noto Sans CJK SC", sans-serif; }

.contact { width: 680px; margin-left: 100px; }
h2 { margin: 0 0 0 30px; width: 581px; height: 40px; display: flex; align-items: center; justify-content: space-between; color: #fe980f; font-size: 36px; font-weight: 700; line-height: 40px; white-space: nowrap; }
h2::before, h2::after { content: ""; width: 70px; height: 4px; margin-top: 3px; background: #f5f5f5; }
address { width: 630px; margin: 50px 0 80px; font-style: normal; font-size: 32px; line-height: 50px; }
.networks { display: flex; align-items: center; margin: 58px 0 0 181px; }
.networks svg { fill: #999; }
.networks svg:nth-child(2) { margin-left: 38px; }
.networks svg:nth-child(3) { margin-left: 38px; }
.networks svg:nth-child(4) { margin-left: 40px; }
.footer { flex: 1; background: #f0f0e9; }
.gauge { position: absolute; left: -2px; top: 939px; width: 19px; height: 102px; border: 4px solid #808080; border-radius: 10px; background: #fff; padding: 39px 2px 0 3px; }
.gauge i { width: 6px; height: 54px; border-radius: 3px; background: #fb7724; }

/* scrollbars */
.vbar { background: #f1f1f1; display: flex; flex-direction: column; align-items: center; }
.vbar .up { margin-top: 14px; border: 8px solid transparent; border-top: 0; border-bottom-color: #a3a3a3; }
.vbar .thumb { margin-top: 12px; width: 30px; height: 719px; background: #c1c1c1; }
.vbar .down { margin-top: auto; margin-bottom: 14px; border: 8px solid transparent; border-bottom: 0; border-top-color: #505050; }
.hbar { background: #f1f1f1; display: flex; align-items: center; }
.hbar .left { margin-left: 10px; border: 8px solid transparent; border-left: 0; border-right-color: #a3a3a3; margin-top: 4px; }
.hbar .thumb { margin: 2px 0 0 13px; width: 2274px; height: 26px; background: #c1c1c1; }
.hbar .right { margin: 4px 13px 0 auto; border: 8px solid transparent; border-right: 0; border-left-color: #505050; }
.corner { background: #dcdcdc; }
```
